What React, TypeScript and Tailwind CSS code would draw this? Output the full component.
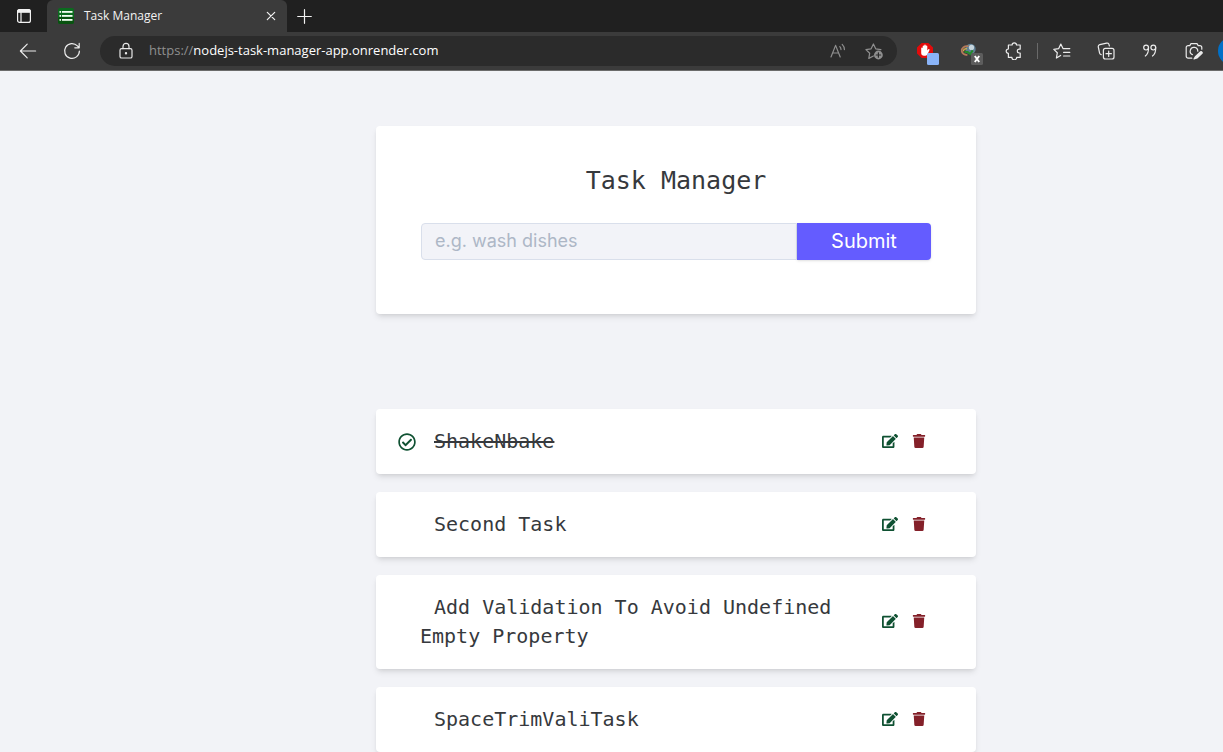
import React from "react";
import { FaEdit, FaRegCheckCircle, FaTrash } from "react-icons/fa";

type Task = { name: string; completed: boolean };

const tasks: Task[] = [
  { name: "ShakeNbake", completed: true },
  { name: "Second Task", completed: false },
  { name: "Add Validation To Avoid Undefined Empty Property", completed: false },
  { name: "SpaceTrimValiTask", completed: false },
];

type IconButtonProps = { label: string; className: string; children: React.ReactNode };

function IconButton({ label, className, children }: IconButtonProps) {
  return (
    <button type="button" aria-label={label} className={`flex shrink-0 items-center justify-center ${className}`}>
      {children}
    </button>
  );
}

function Line({ size = 18, children }: { size?: number; children: React.ReactNode }) {
  return (
    <svg
      width={size}
      height={size}
      viewBox={`0 0 ${size} ${size}`}
      fill="none"
      stroke="currentColor"
      strokeWidth="1.2"
      strokeLinecap="round"
      strokeLinejoin="round"
      aria-hidden="true"
    >
      {children}
    </svg>
  );
}

function TabStrip() {
  return (
    <div className="flex h-8 items-stretch bg-[#202020] text-[#f2f2f2]">
      <IconButton label="Tab actions" className="w-[47px]">
        <Line size={16}>
          <rect x="1.6" y="1.6" width="12.8" height="12.8" rx="2" />
          <path d="M1.6 4.2V3.6a2 2 0 0 1 2-2h8.8a2 2 0 0 1 2 2v.6z" fill="currentColor" />
          <path d="M5 4.5v9.6" />
        </Line>
      </IconButton>
      <div className="flex w-60 items-center rounded-t-md bg-[#3b3b3b] pl-[11px] pr-2">
        <svg width="16" height="16" viewBox="0 0 16 16" aria-hidden="true">
          <rect width="16" height="16" rx="2" fill="#0b6b1e" />
          <rect y="9" width="16" height="7" rx="2" fill="#08520f" />
          <g fill="#f4fff4">
            <rect x="1.5" y="3" width="1.6" height="1.8" />
            <rect x="4" y="3" width="10.5" height="1.8" />
            <rect x="1.5" y="7" width="1.6" height="1.8" />
            <rect x="4" y="7" width="10.5" height="1.8" />
            <rect x="1.5" y="11" width="1.6" height="1.8" />
            <rect x="4" y="11" width="10.5" height="1.8" />
          </g>
        </svg>
        <span className="ml-[10px] flex-1 text-xs">Task Manager</span>
        <IconButton label="Close tab" className="h-4 w-4">
          <Line size={10}>
            <path d="M1.3 1.3l7.4 7.4M8.7 1.3L1.3 8.7" />
          </Line>
        </IconButton>
      </div>
      <IconButton label="New tab" className="w-[35px]">
        <Line size={15}>
          <path d="M7.5.7v13.6M.7 7.5h13.6" />
        </Line>
      </IconButton>
    </div>
  );
}

function AddressBar() {
  return (
    <div className="flex h-[30px] min-w-0 flex-1 items-center rounded-full bg-[#2b2b2b] pl-[17px] pr-[14px]">
      <IconButton label="Site information" className="w-[18px] text-[#e8e8e8]">
        <Line>
          <rect x="3" y="6.6" width="12" height="9.4" rx="1.6" />
          <path d="M6 6.6V4.4a3 3 0 0 1 6 0v2.2" />
          <circle cx="9" cy="11.2" r=".6" fill="currentColor" />
        </Line>
      </IconButton>
      <div className="ml-[14px] flex-1 truncate text-[13px]">
        <span className="text-[#8f8f8f]">https://</span>
        <span className="text-white">nodejs-task-manager-app.onrender.com</span>
      </div>
      <div className="flex items-center gap-[18px] text-[#8f8f8f]">
        <IconButton label="Read aloud" className="w-[18px]">
          <Line>
            <path d="M2 15L6.6 3.4 11.2 15M3.6 11h6" />
            <path d="M10.8 4.6c.8.8 1.2 1.8 1.2 3M13.2 2.4c1.4 1.4 2.2 3.2 2.2 5.2" />
          </Line>
        </IconButton>
        <IconButton label="Add this page to favorites" className="w-[18px]">
          <Line>
            <path d="M8.4 14l-4.6 2.4.9-5.2-3.8-3.6 5.2-.8L8.4 2l2.3 4.8 5.2.8" />
            <circle cx="13.4" cy="13" r="4.4" fill="currentColor" stroke="none" />
            <path d="M13.4 10.8v4.4M11.2 13h4.4" stroke="#2b2b2b" />
          </Line>
        </IconButton>
      </div>
    </div>
  );
}

function Toolbar() {
  return (
    <div className="flex h-[39px] items-center overflow-hidden border-b border-[#6b6b6b] bg-[#3b3b3b] pl-1.5 text-[#ececec]">
      <IconButton label="Back" className="w-11">
        <Line>
          <path d="M16.6 9H1.4M8.2 2.2L1.4 9l6.8 6.8" />
        </Line>
      </IconButton>
      <IconButton label="Refresh" className="mr-1.5 w-11">
        <Line>
          <path d="M16.4 9a7.4 7.4 0 1 1-2-5.1l1.6 1.7M16.2 1.4v4.4h-4.4" />
        </Line>
      </IconButton>
      <AddressBar />
      <IconButton label="Ad blocker" className="ml-2 w-11">
        <svg width="24" height="28" viewBox="0 0 24 28" aria-hidden="true">
          <path d="M6.6 6h6.8L18 10.6v5.8L13.4 21H6.6L2 16.4v-5.8z" fill="#e30b0b" />
          <path
            d="M6.2 11.2c0-1 1.5-1 1.5 0V9.2c0-1.1 1.5-1.1 1.5 0v-.9c0-1.1 1.6-1.1 1.6 0v1c0-1.1 1.5-1.1 1.5 0v4.2l.9-1.1c.7-.7 1.6 0 1.2.9l-1.9 4c-.4.8-1 1.4-2.1 1.4H9c-1.7 0-2.8-1.1-2.8-2.8z"
            fill="#fff"
          />
          <rect x="12" y="16" width="12" height="12" rx="1.5" fill="#8ab4f8" />
        </svg>
      </IconButton>
      <IconButton label="Download manager" className="w-11">
        <svg width="24" height="28" viewBox="0 0 24 28" aria-hidden="true">
          <circle cx="11.5" cy="12" r="5.2" fill="#5f7f94" />
          <circle cx="12.5" cy="10.4" r="2.6" fill="#c5d4dc" />
          <path d="M9.5 9.2C5 8.8 2.2 11.2 2.8 14.2c.5 2.4 3 3.6 5.6 4" fill="none" stroke="#b47a5a" strokeWidth="1.8" />
          <path d="M8 11.6c-2.6 0-3.8 1-3.3 2.6" fill="none" stroke="#d4b44a" strokeWidth="1.4" />
          <path d="M5.5 15h3.2l2.6 2 2.4-3.6" fill="none" stroke="#238a2a" strokeWidth="2" />
          <rect x="12" y="16" width="12" height="12" rx="1.5" fill="#5d5d5d" />
          <path d="M15.8 19l4.4 6M20.2 19l-4.4 6" stroke="#fff" strokeWidth="1.9" />
        </svg>
      </IconButton>
      <IconButton label="Extensions" className="w-[42px]">
        <Line>
          <path d="M3.4 3h3.7a2.2 2.2 0 0 1 4.4 0h3.7v4.2h-1a1.9 1.9 0 0 0 0 3.8h1v4.4h-3.5a2.2 2.2 0 0 1-4.8 0H3.4v-4a2.2 2.2 0 0 1 0-4.4z" />
        </Line>
      </IconButton>
      <div className="mx-0.5 h-4 w-px shrink-0 bg-[#6a6a6a]" />
      <IconButton label="Favorites" className="w-11">
        <Line>
          <path d="M7.6 13.4L3.4 16l.9-5.2L.8 7.4l4.8-.7L7.8 2l2.2 4.6h6.8M10.6 10.4h6.2M10.6 14h6.2" />
        </Line>
      </IconButton>
      <IconButton label="Collections" className="w-11">
        <Line>
          <rect x="6.4" y="6.4" width="10.6" height="10.6" rx="2" />
          <path d="M11.7 9v5.4M9 11.7h5.4" />
          <path d="M4.2 12.6a2 2 0 0 1-1.6-1.5L1.3 5a2 2 0 0 1 1.5-2.4l6.8-1.5A2 2 0 0 1 12 2.6l.4 1.4" />
        </Line>
      </IconButton>
      <IconButton label="Citations" className="w-11">
        <Line>
          <circle cx="5.1" cy="5.6" r="2.4" />
          <path d="M7.5 5.6c.2 3.8-.8 6.6-3.2 8.4" />
          <circle cx="12.3" cy="5.6" r="2.4" />
          <path d="M14.7 5.6c.2 3.8-.8 6.6-3.2 8.4" />
        </Line>
      </IconButton>
      <IconButton label="Web capture" className="w-11">
        <Line>
          <path d="M6.8 16.2H3.2a2 2 0 0 1-2-2V5.6a2 2 0 0 1 2-2h1.6L6 1.6h6l1.2 2h1.6a2 2 0 0 1 2 2v1.6" />
          <path d="M7.4 12.6a3.8 3.8 0 1 1 5.4-3.4" />
          <path d="M15.6 9.8l-5 4.6-1.6 2.6 3-1 5-4.6a1.1 1.1 0 0 0-1.4-1.6z" fill="currentColor" />
        </Line>
      </IconButton>
      <button type="button" aria-label="Profile" className="-mr-[23px] ml-0.5 h-7 w-7 shrink-0 rounded-full bg-[#0070c8]" />
    </div>
  );
}

function TaskForm() {
  return (
    <form className="rounded bg-white px-[45px] pt-[37px] pb-[54px] shadow-md" onSubmit={(event) => event.preventDefault()}>
      <h1 className="text-center font-['DejaVu_Sans_Mono',monospace] text-[25px] leading-9">Task Manager</h1>
      <div className="mt-6 flex h-[37px]">
        <input
          type="text"
          aria-label="Task name"
          placeholder="e.g. wash dishes"
          className="min-w-0 flex-1 rounded-l border border-[#d9dfeb] bg-[#f2f3f8] px-[13px] pb-0.5 font-[Inter,sans-serif] text-lg outline-none placeholder:text-[#adb7c6]"
        />
        <button
          type="submit"
          className="w-[134px] rounded-r bg-[#645cff] pb-0.5 font-[Inter,sans-serif] text-xl text-white shadow-sm"
        >
          Submit
        </button>
      </div>
    </form>
  );
}

function TaskRow({ task }: { task: Task }) {
  return (
    <li className="grid grid-cols-[44px_1fr_auto] items-center rounded bg-white py-[18px] pr-[50px] shadow-md">
      <span className="pl-[22px]">
        {task.completed && <FaRegCheckCircle size={18} className="text-[#0f5132]" aria-label="Completed" />}
      </span>
      <h2 className="indent-[14px] font-['DejaVu_Sans_Mono',monospace] text-xl leading-[29px]">
        <span className={task.completed ? "line-through" : ""}>{task.name}</span>
      </h2>
      <div className="flex items-center gap-3.5 pb-0.5 pl-3.5">
        <a href="#edit" aria-label={`Edit ${task.name}`} className="text-[#0f5132]">
          <FaEdit size={16} />
        </a>
        <button type="button" aria-label={`Delete ${task.name}`} className="text-[#842029]">
          <FaTrash size={14} />
        </button>
      </div>
    </li>
  );
}

export default function App() {
  return (
    <div className="min-h-screen bg-[#f2f3f7] text-[#36393d]">
      <header className="font-['Open_Sans',sans-serif]">
        <TabStrip />
        <Toolbar />
      </header>
      <main className="pt-[55px] pl-[129px]">
        <div className="mx-auto max-w-[600px]">
          <TaskForm />
          <ul className="mt-[95px] flex flex-col gap-[18px]">
            {tasks.map((task) => (
              <TaskRow key={task.name} task={task} />
            ))}
          </ul>
        </div>
      </main>
    </div>
  );
}
